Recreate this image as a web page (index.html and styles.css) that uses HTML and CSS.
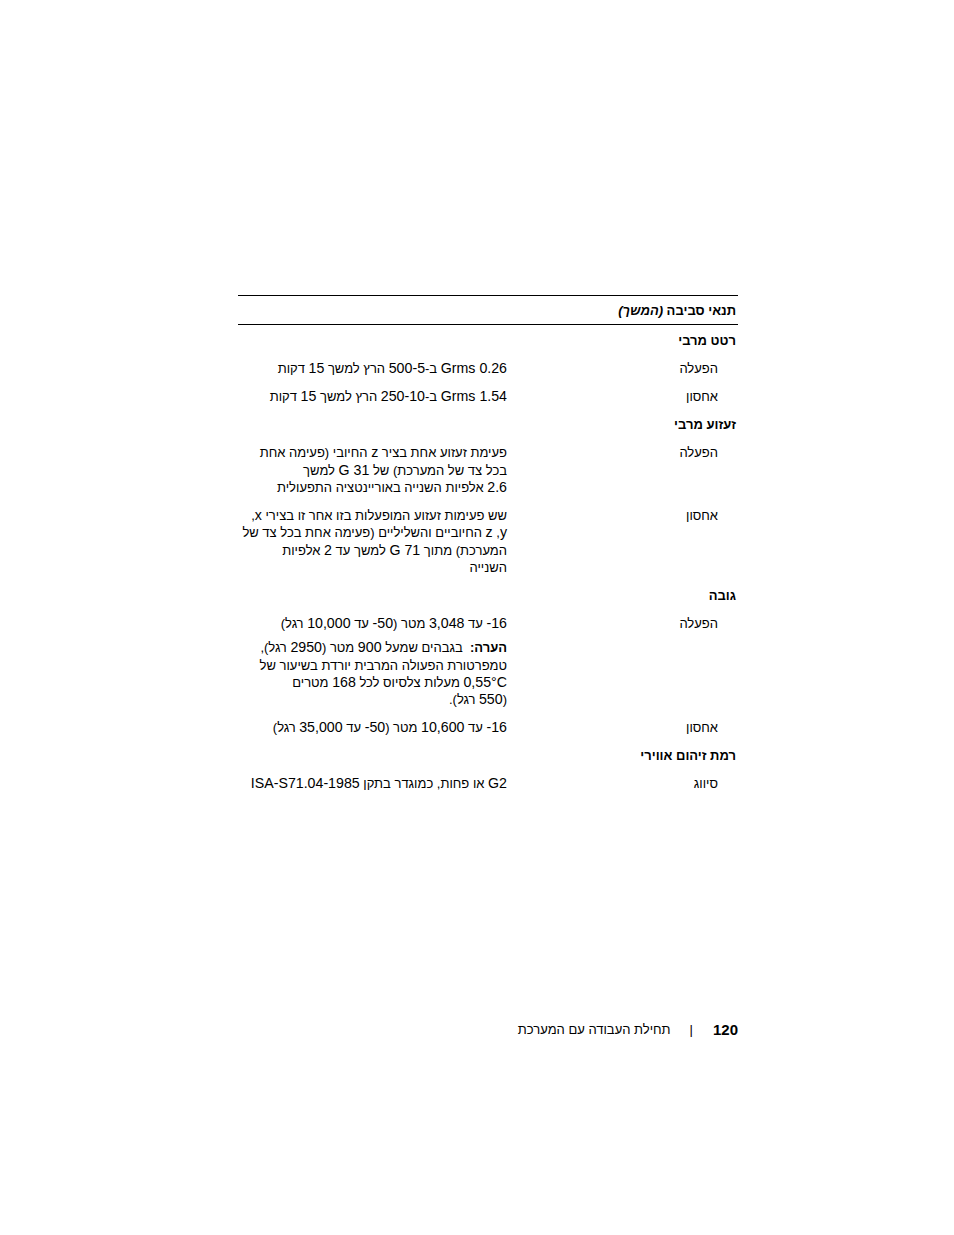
FILE: index.html
```html
<!DOCTYPE html>
<html lang="he">
<head>
<meta charset="utf-8">
<title>תנאי סביבה</title>
<link rel="stylesheet" href="styles.css">
</head>
<body>
<div class="page" dir="rtl">
  <div class="spec">
    <div class="head">תנאי סביבה <i>(המשך)</i></div>

    <div class="sec">רטט מרבי</div>
    <div class="row">
      <div class="lbl">הפעלה</div>
      <div class="val"><div class="ln"><span class="n">0.26 Grms</span> ב-<span class="n">5</span>&rlm;<span class="n">-500</span> הרץ למשך <span class="n">15</span> דקות</div></div>
    </div>
    <div class="row">
      <div class="lbl">אחסון</div>
      <div class="val"><div class="ln"><span class="n">1.54 Grms</span> ב-<span class="n">10</span>&rlm;<span class="n">-250</span> הרץ למשך <span class="n">15</span> דקות</div></div>
    </div>

    <div class="sec">זעזוע מרבי</div>
    <div class="row">
      <div class="lbl">הפעלה</div>
      <div class="val">
        <div class="ln">פעימת זעזוע אחת בציר <span class="n">z</span> החיובי (פעימה אחת</div>
        <div class="ln">בכל צד של המערכת) של <span class="n">31 G</span> למשך</div>
        <div class="ln"><span class="n">2.6</span> אלפיות השנייה באוריינטציה התפעולית</div>
      </div>
    </div>
    <div class="row">
      <div class="lbl">אחסון</div>
      <div class="val">
        <div class="ln">שש פעימות זעזוע המופעלות בזו אחר זו בצירי <span class="n">x</span>,</div>
        <div class="ln"><span class="n">y</span>,&rlm; <span class="n">z</span> החיוביים והשליליים (פעימה אחת בכל צד של</div>
        <div class="ln">המערכת) מתוך <span class="n">71 G</span> למשך עד <span class="n">2</span> אלפיות</div>
        <div class="ln">השנייה</div>
      </div>
    </div>

    <div class="sec">גובה</div>
    <div class="row">
      <div class="lbl">הפעלה</div>
      <div class="val">
        <div class="ln"><span class="n">16-</span> עד <span class="n">3,048</span> מטר (<span class="n">50-</span> עד <span class="n">10,000</span> רגל)</div>
        <div class="note">
          <div class="ln"><b>הערה:</b>&nbsp; בגבהים שמעל <span class="n">900</span> מטר (<span class="n">2950</span> רגל),</div>
          <div class="ln">טמפרטורת הפעולה המרבית יורדת בשיעור של</div>
          <div class="ln">&lrm;<span class="n">0,55°C</span> מעלות צלסיוס לכל <span class="n">168</span> מטרים</div>
          <div class="ln">(<span class="n">550</span> רגל).</div>
        </div>
      </div>
    </div>
    <div class="row">
      <div class="lbl">אחסון</div>
      <div class="val"><div class="ln"><span class="n">16-</span> עד <span class="n">10,600</span> מטר (<span class="n">50-</span> עד <span class="n">35,000</span> רגל)</div></div>
    </div>

    <div class="sec">רמת זיהום אווירי</div>
    <div class="row">
      <div class="lbl">סיווג</div>
      <div class="val"><div class="ln"><span class="n">G2</span> או פחות, כמוגדר בתקן <span class="n">ISA-S71.04-1985</span></div></div>
    </div>
  </div>

  <div class="footer">
    <span class="pnum">120</span>
    <span class="sep">|</span>
    <span class="ftitle">תחילת העבודה עם המערכת</span>
  </div>
</div>
</body>
</html>
```

FILE: styles.css
```css
html, body {
  margin: 0;
  padding: 0;
  background: #fff;
}

body {
  font-family: "Liberation Sans", Arial, sans-serif;
  font-size: 13px;
  color: #000;
}

.page {
  width: 500px;
  margin-left: 238px;
  padding-top: 295px;
}

.spec {
  display: flex;
  flex-direction: column;
  line-height: 17.25px;
}

.head {
  border-top: 1px solid #000;
  border-bottom: 1px solid #000;
  padding: 5.9px 2px 4.9px 0;
  font-weight: bold;
  font-size: 13px;
}

.head i {
  font-style: italic;
}

.sec {
  padding: 6.9px 2px 4px 0;
  font-weight: bold;
  font-size: 13px;
}

.row {
  display: grid;
  grid-template-columns: 231px 1fr;
  padding: 6.9px 0 4px 0;
}

.lbl {
  padding-right: 20px;
}

.ln {
  white-space: nowrap;
}

.n {
  font-size: 14.2px;
  line-height: 1;
}

.note {
  margin-top: 6.9px;
}

.footer {
  display: flex;
  align-items: center;
  margin-top: 223px;
  line-height: 20px;
}

.pnum {
  font-weight: bold;
  font-size: 15px;
}

.sep {
  margin-right: 20px;
  margin-left: 19px;
}
```
